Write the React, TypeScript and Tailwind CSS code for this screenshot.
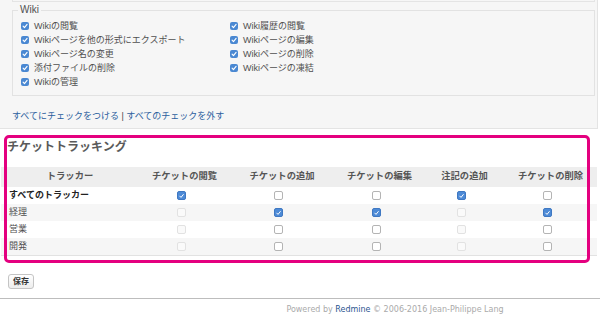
import React from "react";

type CellState = "on" | "off" | "dis";

const wikiPerms = [
  "Wikiの閲覧",
  "Wiki履歴の閲覧",
  "Wikiページを他の形式にエクスポート",
  "Wikiページの編集",
  "Wikiページ名の変更",
  "Wikiページの削除",
  "添付ファイルの削除",
  "Wikiページの凍結",
  "Wikiの管理",
];

const columns = ["チケットの閲覧", "チケットの追加", "チケットの編集", "注記の追加", "チケットの削除"];

const trackers: { name: string; bold?: boolean; cells: CellState[] }[] = [
  { name: "すべてのトラッカー", bold: true, cells: ["on", "off", "off", "on", "off"] },
  { name: "経理", cells: ["dis", "on", "on", "dis", "on"] },
  { name: "営業", cells: ["dis", "off", "off", "dis", "off"] },
  { name: "開発", cells: ["dis", "off", "off", "dis", "off"] },
];

const gridCols = "grid grid-cols-[138px_91px_104px_91px_79px_93px]";

function Check({ className }: { className?: string }) {
  return (
    <svg viewBox="0 0 10 10" className={className} fill="none">
      <path d="M2.6 5.2 L4.3 7 L7.6 2.9" stroke="white" strokeWidth="1.4" strokeLinecap="round" strokeLinejoin="round" />
    </svg>
  );
}

function WikiBox() {
  return (
    <span className="flex h-[8px] w-[8px] items-center justify-center rounded-[2px] bg-[#4a88d2]">
      <Check className="h-[8px] w-[8px]" />
    </span>
  );
}

function TableBox({ state }: { state: CellState }) {
  if (state === "on") {
    return (
      <span className="mr-[7px] flex h-[9px] w-[9px] items-center justify-center rounded-[2px] border border-[#3f78c2] bg-[#4d8ad6]">
        <Check className="h-[8px] w-[8px]" />
      </span>
    );
  }
  if (state === "dis") {
    return <span className="mr-[7px] h-[9px] w-[9px] rounded-[2px] border border-[#e2e2e2] bg-[#fafafa]" />;
  }
  return <span className="mr-[7px] h-[9px] w-[9px] rounded-[2px] border border-[#b4b4b4] bg-white" />;
}

export default function App() {
  return (
    <div className="relative h-[315px] w-[600px] overflow-hidden bg-white font-['Liberation_Sans','Noto_Sans_CJK_JP',sans-serif] text-[#333]">
      {/* permission modules box */}
      <div className="flex h-[129px] w-[598px] flex-col border-r border-b border-[#e4e4e4] bg-[#f6f6f6] pr-[2px] pl-[12px] text-[#505050]">
        <div className="h-[2px] border-x border-b border-[#e4e4e4]" />
        <fieldset className="mt-[1px] border border-[#e2e2e2]">
          <legend className="ml-[5px] px-[2px] text-[10px] leading-[14px] text-[#505050]">Wiki</legend>
          <div className="grid grid-cols-[209px_1fr] pt-[2px] pb-[6px] pl-[8px]">
            {wikiPerms.map((p) => (
              <label key={p} className="flex h-[14px] items-center gap-[5px] text-[9px] leading-[14px]">
                <WikiBox />
                <span>{p}</span>
              </label>
            ))}
          </div>
        </fieldset>
        <div className="mt-[13px] text-[9px] leading-[14px]">
          <span className="text-[#2c5f9e]">すべてにチェックをつける</span>
          <span className="text-[#444]"> | </span>
          <span className="text-[#2c5f9e]">すべてのチェックを外す</span>
        </div>
      </div>

      {/* tracker permissions */}
      <h3 className="mt-[9px] pl-[7px] text-[12px] leading-[18px] font-bold text-[#5a5a5a]">チケットトラッキング</h3>
      <div className="mt-[11px] ml-[1px] w-[596px] border-b border-[#e2e2e2]">
        <div className={`${gridCols} h-[20px] items-center bg-[#eeeeee] text-[9.3px] font-bold text-[#555]`}>
          <div className="text-center">トラッカー</div>
          {columns.map((c) => (
            <div key={c} className="text-center">
              {c}
            </div>
          ))}
        </div>
        {trackers.map((t, i) => (
          <div
            key={t.name}
            className={`${gridCols} h-[17px] items-center text-[9px] ${i % 2 === 1 ? "bg-[#f6f6f6]" : "bg-white"}`}
          >
            <div className={`pl-[8px] ${t.bold ? "font-bold text-[#222]" : "text-[#505050]"}`}>{t.name}</div>
            {t.cells.map((s, j) => (
              <div key={j} className="flex justify-center">
                <TableBox state={s} />
              </div>
            ))}
          </div>
        ))}
      </div>

      <button className="mt-[18px] ml-[8px] flex h-[15px] w-[26px] items-center justify-center rounded-[3px] border border-[#c4c4c4] bg-gradient-to-b from-white to-[#ededed] text-[8px] font-bold text-[#333]">
        保存
      </button>

      <div className="mt-[9px] border-t border-[#bdbdbd] pt-[2px] pl-[190px] text-center font-['DejaVu_Sans',sans-serif] text-[8px] leading-[18px] text-[#aaa]">
        Powered by <span className="text-[#2b5590]">Redmine</span> © 2006-2016 Jean-Philippe Lang
      </div>

      {/* highlight annotation */}
      <div className="pointer-events-none absolute top-[135px] left-[4px] h-[128px] w-[586px] rounded-[5px] border-[3px] border-[#e4007f]" />
    </div>
  );
}
